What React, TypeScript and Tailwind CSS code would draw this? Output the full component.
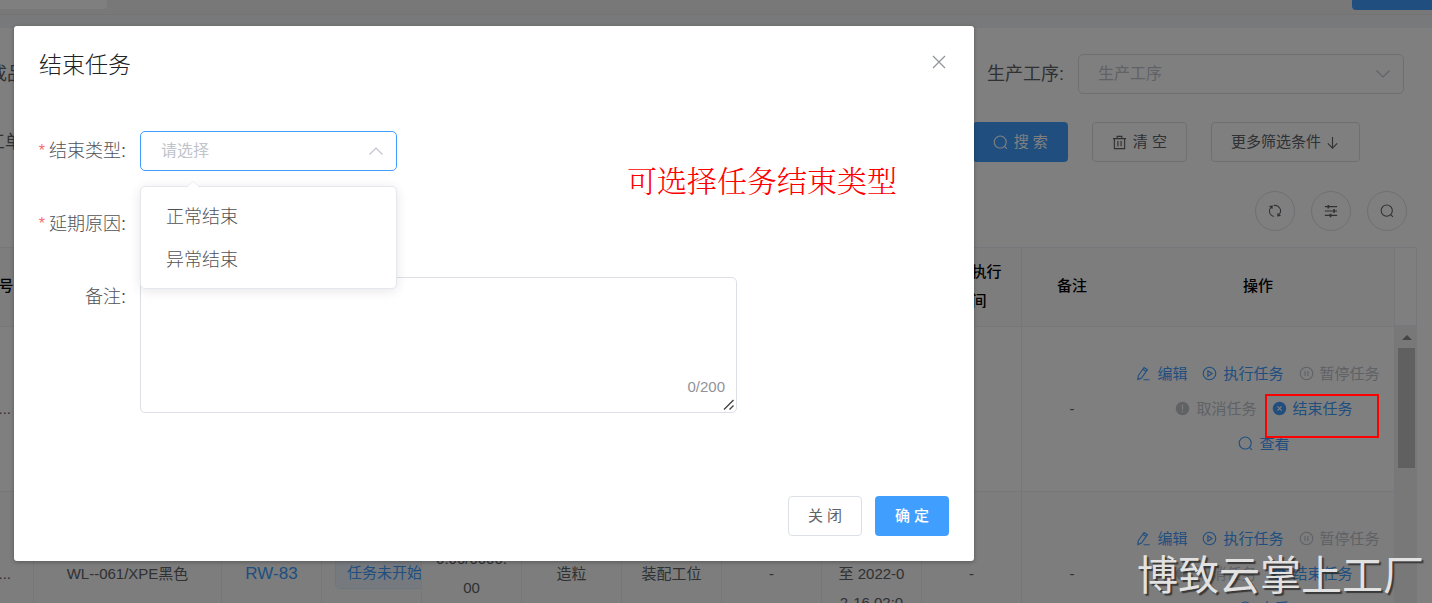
import React, { useState } from 'react';

interface IconProps {
  className?: string;
}

interface Task {
  id: number;
  order: string;
  material: string;
  code: string;
  status: string;
  quantity: string;
  process: string;
  station: string;
  period: string;
}

const Svg = ({ className = 'size-[15px]', children }: IconProps & { children: React.ReactNode }) => (
  <svg viewBox="0 0 16 16" fill="none" stroke="currentColor" strokeWidth="1.2" className={`shrink-0 ${className}`} aria-hidden="true">
    {children}
  </svg>
);

const SearchIcon = ({ className }: IconProps) => (
  <Svg className={className}>
    <circle cx="7.7" cy="7.5" r="6.4" />
    <path d="M12.2 12.2l2.6 2.6" />
  </Svg>
);

const TrashIcon = ({ className }: IconProps) => (
  <Svg className={className}>
    <path d="M1 3.8h14M5.5 3.5V1.5h5v2M2.5 4v10.5h11V4M6.3 6.5v5.5M9.7 6.5v5.5" />
  </Svg>
);

const ArrowDownIcon = ({ className }: IconProps) => (
  <Svg className={className}>
    <path d="M8 2v12M3 9l5 5 5-5" />
  </Svg>
);

const ChevronIcon = ({ className }: IconProps) => (
  <Svg className={className}>
    <path d="M1.5 4.5L8 11l6.5-6.5" />
  </Svg>
);

const CloseIcon = ({ className }: IconProps) => (
  <Svg className={className}>
    <path d="M2 2l12 12M14 2L2 14" />
  </Svg>
);

const RefreshIcon = ({ className }: IconProps) => (
  <Svg className={className}>
    <path d="M3.2 4A6.3 6.3 0 0 0 6.6 14.2M12.8 12A6.3 6.3 0 0 0 6.6 1.8" />
    <path d="M1 2.2l4.6-.4-.6 4.2zM15 13.8l-4.6.4.6-4.2z" fill="currentColor" stroke="none" />
  </Svg>
);

const OperationIcon = ({ className }: IconProps) => (
  <Svg className={className}>
    <path d="M1 3h14M1 8h14M1 13h14" />
    <path d="M5 1v4M11.5 6v4M7.5 11v4" strokeWidth="2" />
  </Svg>
);

const EditIcon = ({ className }: IconProps) => (
  <Svg className={className}>
    <path d="M2.4 10.4L8.6 1.6l3.6 2.3-6.3 8.9-3.9 1.6zM7.3 3.5l3.6 2.4M8 14.6h6.5" />
  </Svg>
);

const PlayIcon = ({ className }: IconProps) => (
  <Svg className={className}>
    <circle cx="8" cy="8" r="6.7" />
    <path d="M6.3 5v6l4.5-3z" />
  </Svg>
);

const PauseIcon = ({ className }: IconProps) => (
  <Svg className={className}>
    <circle cx="8" cy="8" r="6.7" />
    <path d="M6.5 5.3v5.4M9.5 5.3v5.4" />
  </Svg>
);

const WarningIcon = ({ className }: IconProps) => (
  <Svg className={className}>
    <circle cx="8" cy="8" r="7.2" fill="currentColor" stroke="none" />
    <path d="M8 4v5M8 10.5V12" stroke="#fff" strokeWidth="1.2" />
  </Svg>
);

const ErrorIcon = ({ className }: IconProps) => (
  <Svg className={className}>
    <circle cx="8" cy="8" r="7.2" fill="currentColor" stroke="none" />
    <path d="M5.8 5.8l4.4 4.4M10.2 5.8l-4.4 4.4" stroke="#fff" strokeWidth="1.2" />
  </Svg>
);

const ACTIONS = [
  { label: '编辑', icon: EditIcon, disabled: false },
  { label: '执行任务', icon: PlayIcon, disabled: false },
  { label: '暂停任务', icon: PauseIcon, disabled: true },
  { label: '取消任务', icon: WarningIcon, disabled: true },
  { label: '结束任务', icon: ErrorIcon, disabled: false },
  { label: '查看', icon: SearchIcon, disabled: false },
];

const HEADERS = ['工单编号', '', '', '', '', '', '', '', '', '实际执行时间', '备注', '操作'];

const task = {
  order: 'WO20...',
  material: 'WL--061/XPE黑色',
  code: 'RW-83',
  status: '任务未开始',
  quantity: '0.00/0000.00',
  process: '造粒',
  station: '装配工位',
  period: '2022-02-16 02:00:00 至 2022-02-16 02:00:00',
};

const TASKS: Task[] = [
  { id: 1, ...task },
  { id: 2, ...task },
];

const END_TYPES = ['正常结束', '异常结束'];

const Cell = ({ children, className = 'px-[13px]' }: { children?: React.ReactNode; className?: string }) => (
  <td className={`h-[165px] pb-[2px] border-r border-b border-[#ebeef5] overflow-hidden ${className}`}>{children}</td>
);

const TaskRow = ({ item, striped }: { item: Task; striped: boolean }) => (
  <tr className={striped ? 'bg-[#fafafa]' : 'bg-white'}>
    <Cell>{item.order}</Cell>
    <Cell>{item.material}</Cell>
    <Cell>
      <a href="#task" className="text-[17px] text-[#409eff]">{item.code}</a>
    </Cell>
    <Cell className="pl-[13px]">
      <div className="overflow-hidden">
        <span className="block w-[99px] h-8 leading-[30px] rounded-[5px] border border-[#d9ecff] bg-[#ecf5ff] text-[#409eff] text-left whitespace-nowrap pl-[11px]">
          {item.status}
        </span>
      </div>
    </Cell>
    <Cell className="px-[13px] break-all">{item.quantity}</Cell>
    <Cell>{item.process}</Cell>
    <Cell>{item.station}</Cell>
    <Cell>-</Cell>
    <Cell className="px-[13px] break-all">{item.period}</Cell>
    <Cell>-</Cell>
    <td className="pb-[2px] border-b border-[#ebeef5]">-</td>
    <Cell>
      <div className="flex flex-wrap justify-center gap-x-[3px]">
        {ACTIONS.map(({ label, icon: Icon, disabled }) => (
          <button
            key={label}
            disabled={disabled}
            className={`flex items-center gap-[6px] h-[35px] ml-3 first:ml-0 ${disabled ? 'text-[#c0c4cc]' : 'text-[#409eff]'}`}
          >
            <Icon />
            {label}
          </button>
        ))}
      </div>
    </Cell>
  </tr>
);

const TaskPage = () => (
  <div className="flex flex-col h-screen">
    {/* Barra de abas */}
    <div className="flex justify-between items-start h-[15px] shrink-0 bg-[#f0f0f0] border-b border-[#e6e6e6]">
      <div className="w-[107px] h-[9px] bg-white rounded-br-sm" />
      <div className="w-20 h-[10px] bg-[#409eff] rounded-bl-[4px]" />
    </div>
    <div className="h-[13px] shrink-0 bg-[#f0f2f5]" />

    <div className="flex-1 min-h-0 bg-white pt-[26px]">
      <div className="-ml-[11px] flex items-center justify-between pr-7 text-[18px] text-[#606266]">
        <span>成品</span>
        <div className="flex items-center gap-[14px]">
          <label htmlFor="process">生产工序:</label>
          <div className="relative">
            <select id="process" defaultValue="" className="appearance-none w-[326px] h-10 rounded-[5px] border border-[#dcdfe6] bg-white pl-[19px] text-[16px] text-[#c0c4cc]">
              <option value="">生产工序</option>
            </select>
            <ChevronIcon className="size-4 absolute right-[13px] top-3 text-[#c0c4cc] pointer-events-none" />
          </div>
        </div>
      </div>

      <div className="-ml-[13px] mt-7 flex items-center justify-between pr-[72px] text-[15px] text-[#606266]">
        <span className="text-[18px]">工单</span>
        <div className="flex gap-6">
          <button className="h-10 px-5 flex items-center gap-[6px] rounded-[4px] bg-[#409eff] text-white">
            <SearchIcon />
            搜 索
          </button>
          <button className="h-10 px-[19px] flex items-center gap-[6px] rounded-[4px] border border-[#dcdfe6]">
            <TrashIcon />
            清 空
          </button>
          <button className="h-10 px-[19px] flex items-center gap-1 rounded-[4px] border border-[#dcdfe6]">
            更多筛选条件
            <ArrowDownIcon />
          </button>
        </div>
      </div>

      <div className="mt-[29px] flex justify-end gap-4 pr-[25px] text-[#606266]">
        {[
          { label: '刷新', icon: RefreshIcon },
          { label: '列', icon: OperationIcon },
          { label: '搜索', icon: SearchIcon },
        ].map(({ label, icon: Icon }) => (
          <button key={label} aria-label={label} className="size-10 flex items-center justify-center rounded-full border border-[#dcdfe6]">
            <Icon className="size-[14px]" />
          </button>
        ))}
      </div>

      <div className="mt-4 -ml-[66px] mr-[15px] flex text-[15px] leading-[29px] text-[#606266]">
        <div className="flex-1 min-w-0">
          <table className="w-full table-fixed border-separate border-spacing-0 text-center border-t border-[#ebeef5]">
            <colgroup>
              <col className="w-[100px]" />
              <col className="w-[188px]" />
              {HEADERS.slice(2, 11).map((_, i) => (
                <col key={i} className="w-[100px]" />
              ))}
              <col />
            </colgroup>
            <thead>
              <tr className="bg-[#fafafa] text-black">
                {HEADERS.map((title, i) => (
                  <th
                    key={i}
                    className={`h-[79px] px-[19px] pb-[3px] font-medium border-b border-[#ebeef5] ${i === 10 ? '' : 'border-r'}`}
                  >
                    {title}
                  </th>
                ))}
              </tr>
            </thead>
            <tbody>
              {TASKS.map((item, i) => (
                <TaskRow key={item.id} item={item} striped={i % 2 === 1} />
              ))}
            </tbody>
          </table>
        </div>
        {/* Barra de rolagem */}
        <div className="w-[22px] flex flex-col">
          <div className="h-[79px] border-t border-r border-b border-[#ebeef5]" />
          <div className="flex-1 bg-[#f1f1f1] pt-[9px] pl-[3px]">
            <svg viewBox="0 0 10 5" className="w-[10px] h-[5px] ml-1" aria-hidden="true">
              <path d="M0 5L5 0l5 5z" fill="#8a8a8a" />
            </svg>
            <div className="mt-2 w-[17px] h-[120px] bg-[#c1c1c1]" />
          </div>
        </div>
      </div>
    </div>
  </div>
);

const FormRow = ({ label, htmlFor, required, children }: { label: string; htmlFor: string; required?: boolean; children: React.ReactNode }) => (
  <div className="flex items-start">
    <label htmlFor={htmlFor} className="w-[101px] h-10 shrink-0 pr-[14px] flex items-center justify-end text-[18px] font-light text-[#505256] whitespace-nowrap">
      {required && <span className="mr-1 text-[16px] text-[#f56c6c]">*</span>}
      {label}
    </label>
    {children}
  </div>
);

const EndTaskDialog = () => {
  const [endType, setEndType] = useState('');
  const [open, setOpen] = useState(true);

  const handleSelect = (value: string) => {
    setEndType(value);
    setOpen(false);
  };

  return (
    <div role="dialog" aria-label="结束任务" className="relative w-full max-w-[960px] rounded-[3px] bg-white p-[25px] shadow-[0_1px_4px_rgba(0,0,0,0.3)]">
      <div className="flex items-start justify-between">
        <h2 className="text-[23px] leading-7 font-light text-[#202124]">结束任务</h2>
        <button aria-label="关闭" className="mt-[3px] mr-[2px] text-[#909399]">
          <CloseIcon className="size-4" />
        </button>
      </div>

      <form className="mt-[52px] flex flex-col gap-[33px]">
        <FormRow label="结束类型:" htmlFor="endType" required>
          <div className="relative w-[257px]">
            <select
              id="endType"
              value={endType}
              onChange={e => setEndType(e.target.value)}
              className="appearance-none w-full h-10 rounded-[5px] border border-[#409eff] bg-white pl-5 text-[16px] text-[#c0c4cc] outline-none"
            >
              <option value="">请选择</option>
              {END_TYPES.map(type => (
                <option key={type} value={type}>{type}</option>
              ))}
            </select>
            <ChevronIcon className="size-4 absolute right-[13px] top-3 rotate-180 text-[#c0c4cc] pointer-events-none" />
            {open && (
              <div className="absolute z-10 left-0 top-[55px] w-full rounded-[5px] border border-[#e4e7ed] bg-white pt-[9px] pb-[6px] shadow-[0_2px_12px_rgba(0,0,0,0.1)]">
                <svg viewBox="0 0 14 7" className="absolute left-[45px] -top-[6px] w-[14px] h-[7px]" aria-hidden="true">
                  <path d="M0 7l7-6 7 6z" fill="#fff" />
                  <path d="M0 6.5L7 .5l7 6" fill="none" stroke="#ebeef5" />
                </svg>
                {END_TYPES.map(type => (
                  <button
                    key={type}
                    type="button"
                    onClick={() => handleSelect(type)}
                    className="block w-full h-[43px] px-[25px] text-left text-[18px] font-light text-[#505256]"
                  >
                    {type}
                  </button>
                ))}
              </div>
            )}
          </div>
        </FormRow>

        <FormRow label="延期原因:" htmlFor="delayReason" required>
          <select id="delayReason" className="appearance-none w-[257px] h-10 rounded-[5px] border border-[#dcdfe6] bg-white" />
        </FormRow>

        <FormRow label="备注:" htmlFor="remark">
          <div className="relative w-[597px] h-[136px]">
            <textarea id="remark" maxLength={200} className="block w-full h-full resize-none rounded-[5px] border border-[#dcdfe6] bg-white px-5 py-2 outline-none" />
            <span className="absolute right-3 bottom-4 text-[15px] leading-5 text-[#909399]">0/200</span>
            <svg viewBox="0 0 12 12" className="absolute right-[2px] bottom-[2px] size-3" aria-hidden="true">
              <path d="M1 10.5L10.5 1M6.5 10.5l4-4" fill="none" stroke="#444" strokeWidth="1.4" />
            </svg>
          </div>
        </FormRow>
      </form>

      <div className="mt-[83px] flex justify-end gap-[13px] text-[15px]">
        <button className="h-10 w-[74px] rounded-[4px] border border-[#dcdfe6] text-[#606266]">关 闭</button>
        <button className="h-10 w-[74px] rounded-[4px] bg-[#409eff] text-white font-medium">确 定</button>
      </div>

      <p className="absolute left-[613px] top-[131px] text-[30px] leading-[44px] text-[#f00] font-light font-['Noto_Serif_CJK_SC','Noto_Sans_CJK_SC',serif]">
        可选择任务结束类型
      </p>
    </div>
  );
};

export default function App() {
  return (
    <div className="relative h-screen overflow-hidden font-['Liberation_Sans','Noto_Sans_CJK_SC',sans-serif]">
      <TaskPage />
      <div className="absolute inset-0 bg-black/50 pt-[26px] pl-[14px]">
        <EndTaskDialog />
      </div>
      {/* Marcação e marca d'água */}
      <div className="absolute right-[53px] top-[394px] w-[114px] h-[44px] border-2 border-[#f00]" />
      <p className="absolute right-[8px] bottom-[3px] text-[41px] leading-[48px] text-[#e2e2e2] [text-shadow:2px_2px_1px_rgba(40,40,40,0.8)]">
        博致云掌上工厂
      </p>
    </div>
  );
}
